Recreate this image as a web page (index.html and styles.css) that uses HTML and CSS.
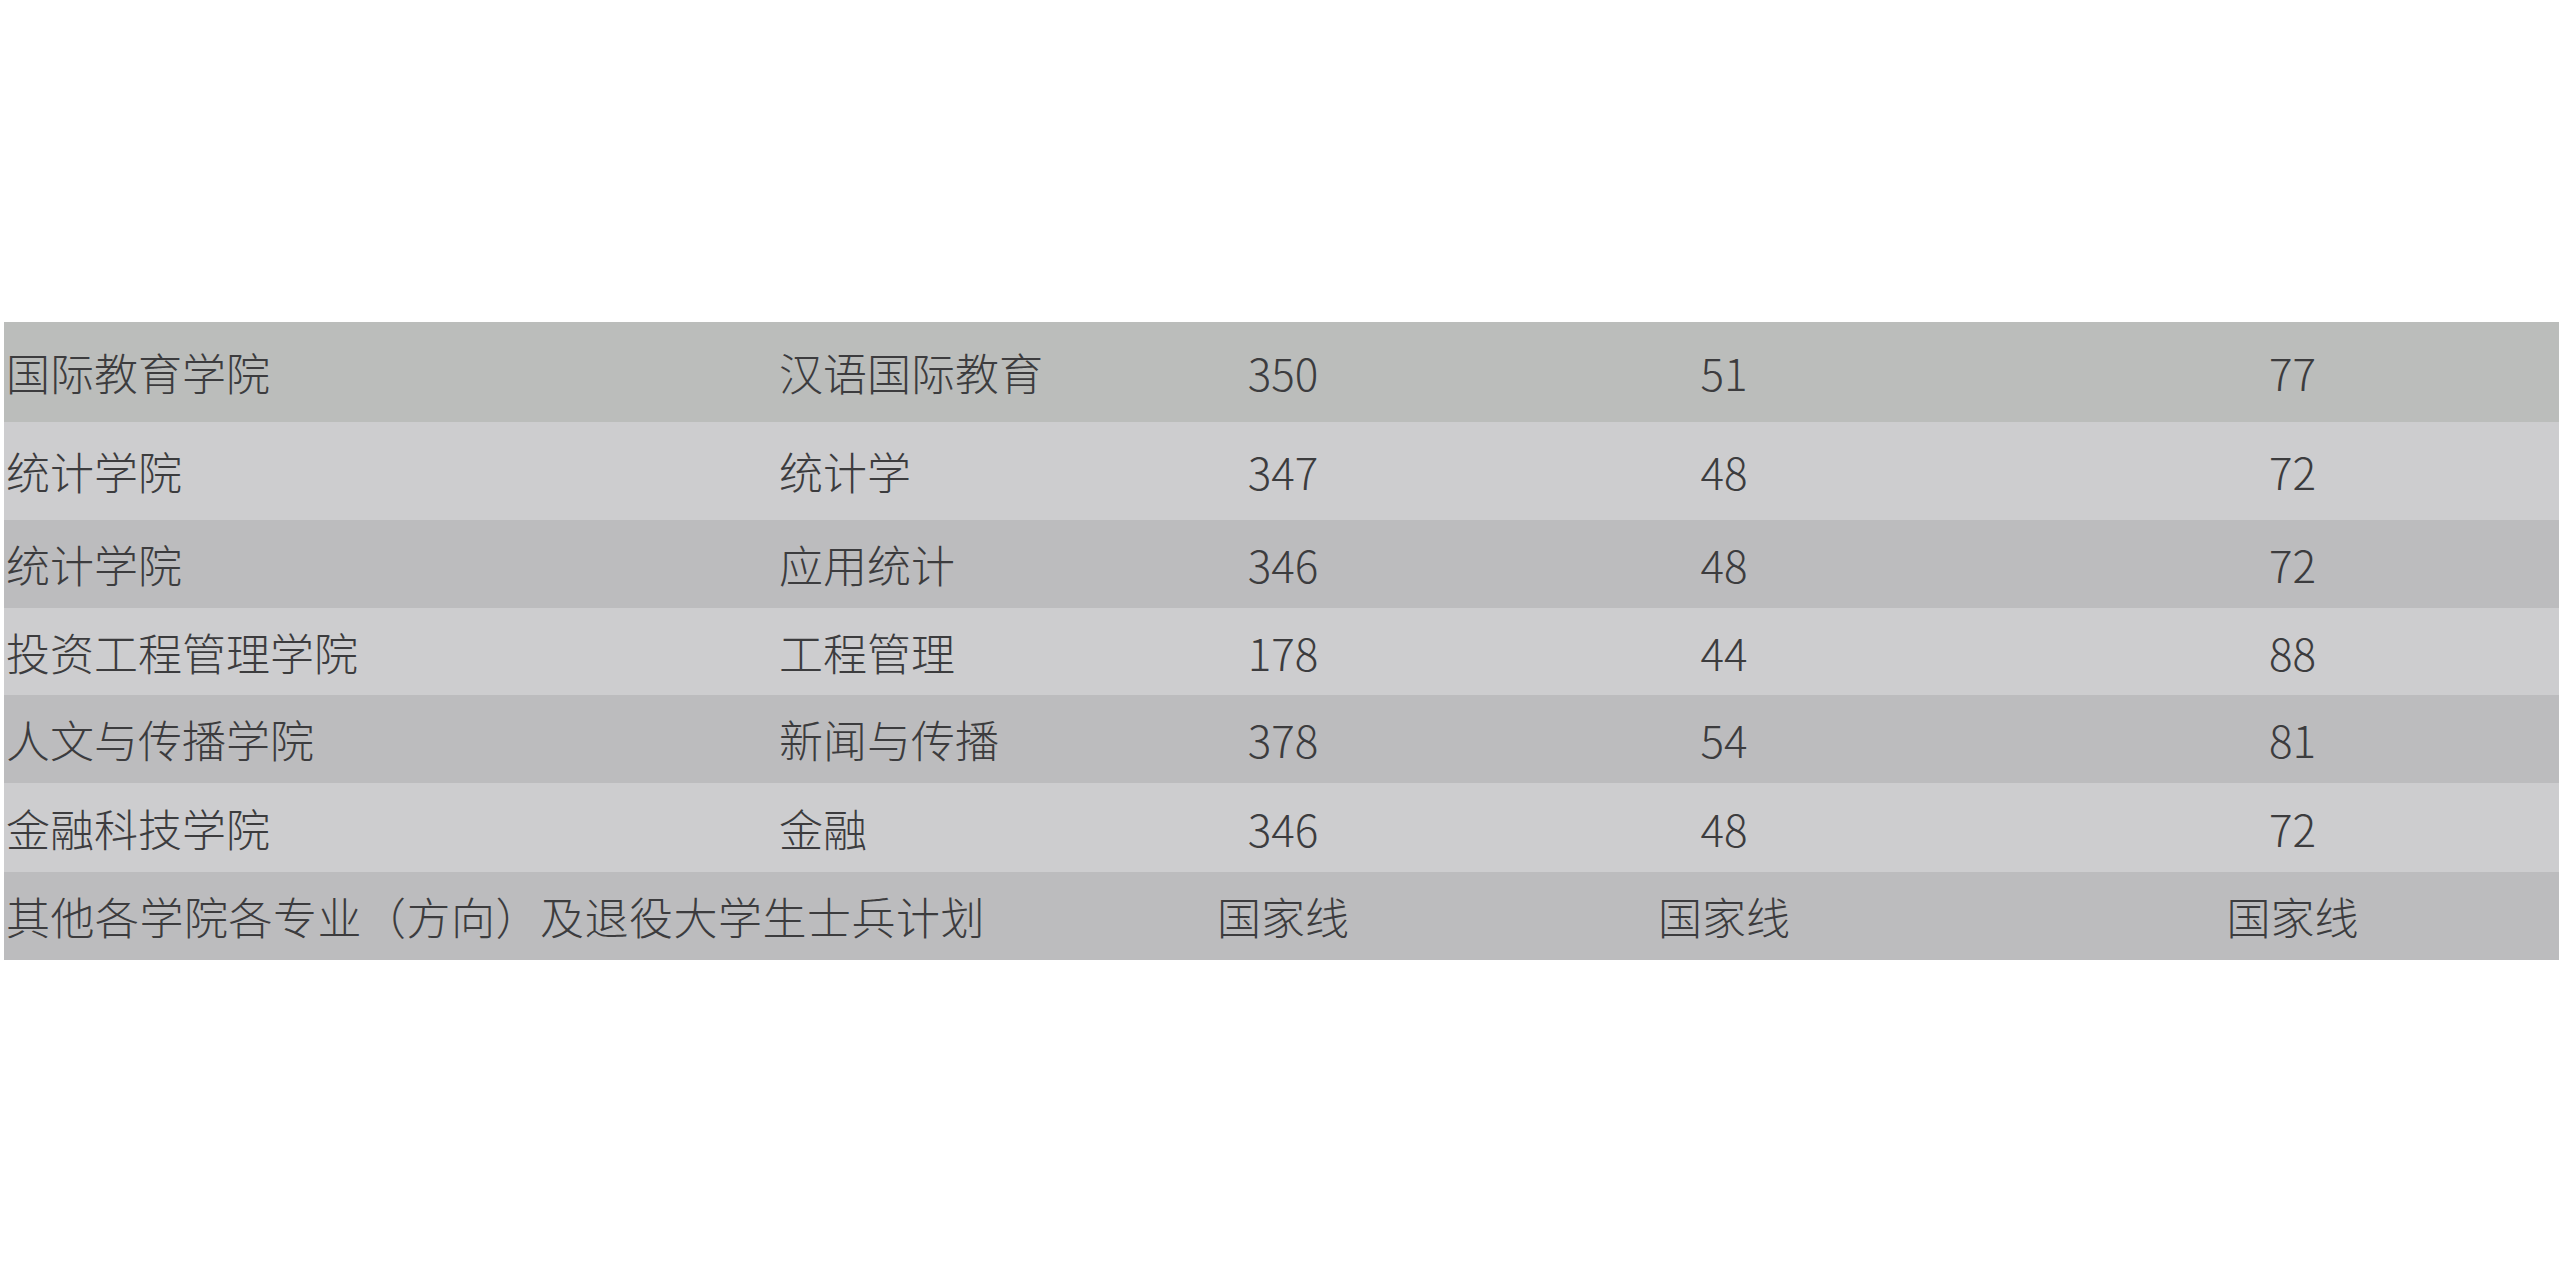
FILE: index.html
```html
<!DOCTYPE html>
<html lang="zh-CN">
<head>
<meta charset="utf-8">
<title>分数线</title>
<link rel="stylesheet" href="styles.css">
</head>
<body>
<div class="page">
  <table class="scores">
    <colgroup>
      <col class="c1"><col class="c2"><col class="c3"><col class="c4"><col class="c5">
    </colgroup>
    <tbody>
      <tr class="first r-tall1"><td class="t1">国际教育学院</td><td class="t2">汉语国际教育</td><td class="num">350</td><td class="num">51</td><td class="num last">77</td></tr>
      <tr class="light r-tall2"><td class="t1">统计学院</td><td class="t2">统计学</td><td class="num">347</td><td class="num">48</td><td class="num last">72</td></tr>
      <tr class="dark r88"><td class="t1">统计学院</td><td class="t2">应用统计</td><td class="num">346</td><td class="num">48</td><td class="num last">72</td></tr>
      <tr class="light r87"><td class="t1">投资工程管理学院</td><td class="t2">工程管理</td><td class="num">178</td><td class="num">44</td><td class="num last">88</td></tr>
      <tr class="dark r88"><td class="t1">人文与传播学院</td><td class="t2">新闻与传播</td><td class="num">378</td><td class="num">54</td><td class="num last">81</td></tr>
      <tr class="light r89"><td class="t1">金融科技学院</td><td class="t2">金融</td><td class="num">346</td><td class="num">48</td><td class="num last">72</td></tr>
      <tr class="dark r88"><td class="t1 wide" colspan="2">其他各学院各专业（方向）及退役大学生士兵计划</td><td class="num">国家线</td><td class="num">国家线</td><td class="num last">国家线</td></tr>
    </tbody>
  </table>
</div>
</body>
</html>
```
FILE: styles.css
```css
html, body {
  margin: 0;
  padding: 0;
  background: #ffffff;
}

.page {
  padding: 322px 0 0 4px;
}

.scores {
  width: 2555px;
  border-collapse: collapse;
  table-layout: fixed;
  font-family: "Noto Sans CJK SC", "Microsoft YaHei", sans-serif;
  font-weight: 300;
  font-size: 44px;
  color: #3c3c3e;
  box-shadow: inset -2px 0 0 rgba(0,0,0,0.05);
}

.c1 { width: 772px; }
.c2 { width: 354px; }
.c3 { width: 306px; }
.c4 { width: 576px; }
.c5 { width: 547px; }

.scores td {
  padding: 0;
  vertical-align: middle;
  white-space: nowrap;
  line-height: 1;
}

.first { background: #bbbdbb; }
.dark { background: #bcbcbe; }
.light { background: #cdcdcf; }

.r-tall1 { height: 100px; }
.r-tall2 { height: 98px; }
.r87 { height: 87px; }
.r88 { height: 88px; }
.r89 { height: 89px; }

.t1 { padding-left: 2px !important; text-align: left; }
.t2 { padding-left: 3px !important; text-align: left; }
.wide { letter-spacing: 0.5px; }
.num { text-align: center; }
.last { padding-left: 14px !important; }
```
